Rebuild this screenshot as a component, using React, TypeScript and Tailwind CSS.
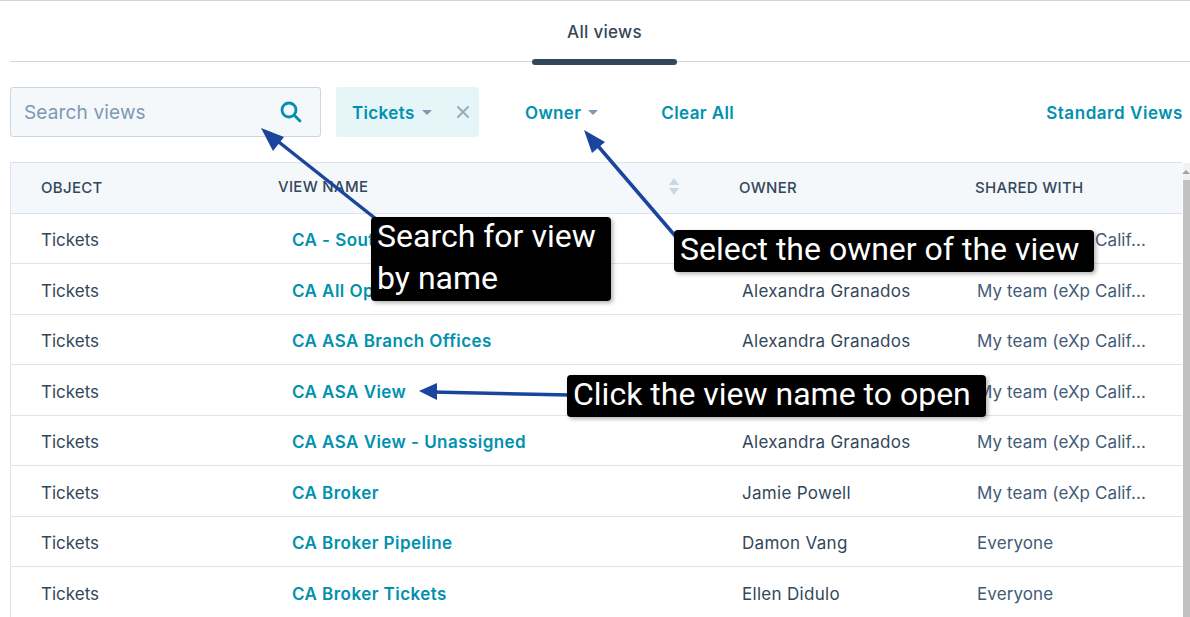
import { X } from 'lucide-react';

const rows = [
  { name: 'CA - South', owner: 'Alexandra Granados', shared: 'My team (eXp Calif...' },
  { name: 'CA All Open', owner: 'Alexandra Granados', shared: 'My team (eXp Calif...' },
  { name: 'CA ASA Branch Offices', owner: 'Alexandra Granados', shared: 'My team (eXp Calif...' },
  { name: 'CA ASA View', owner: 'Alexandra Granados', shared: 'My team (eXp Calif...' },
  { name: 'CA ASA View - Unassigned', owner: 'Alexandra Granados', shared: 'My team (eXp Calif...' },
  { name: 'CA Broker', owner: 'Jamie Powell', shared: 'My team (eXp Calif...' },
  { name: 'CA Broker Pipeline', owner: 'Damon Vang', shared: 'Everyone' },
  { name: 'CA Broker Tickets', owner: 'Ellen Didulo', shared: 'Everyone' },
];

function Caret() {
  return <span className="ml-[7px] mt-[-3px] h-0 w-0 border-x-[5px] border-t-[5px] border-x-transparent border-t-[#7c98b6]" />;
}

function Callout({ className, children }: { className: string; children: React.ReactNode }) {
  return (
    <div className={`absolute rounded-[4px] bg-black px-[6px] font-['Roboto',sans-serif] text-[32px] leading-[42px] text-white shadow-[2px_2px_4px_rgba(0,0,0,0.3)] ${className}`}>
      <div className="mt-[-2px]">{children}</div>
    </div>
  );
}

export default function App() {
  return (
    <div className="relative h-[617px] w-[1190px] overflow-hidden border-t border-[#cbd6e2] bg-white font-['Inter',sans-serif] text-[#33475b]">
      {/* Tabs */}
      <div className="ml-[10px] flex h-[61px] border-b border-[#cbd6e2] pl-[522px]">
        <div className="relative flex h-[61px] w-[145px] items-start justify-center pt-[20px] text-[17px] leading-[22px] font-medium tracking-[0.3px]">
          All views
          <div className="absolute bottom-[-3px] left-0 right-0 h-[6px] rounded-full bg-[#33475b]" />
        </div>
      </div>

      {/* Filters */}
      <div className="mt-[25px] flex h-[50px] items-center pl-[10px] pr-[7px]">
        <div className="flex h-[50px] w-[311px] items-center justify-between rounded-[3px] border border-[#cbd6e2] bg-[#f5f8fa] pl-[13px] pr-[18px] text-[19px] tracking-[0.15px] text-[#7c98b6]">
          <span className="pt-[2px]">Search views</span>
          <svg width="22" height="22" viewBox="0 0 22 22" fill="none" stroke="#0091ae" strokeWidth="2.8" strokeLinecap="round">
            <circle cx="9" cy="9" r="7" />
            <line x1="14.5" y1="14.5" x2="20" y2="20" />
          </svg>
        </div>
        <div className="ml-[15px] flex h-[50px] w-[143px] items-center rounded-[3px] bg-[#e5f5f8] pl-[16px] pt-[4px] text-[17px] font-semibold tracking-[0.35px] text-[#0091ae]">
          Tickets
          <Caret />
          <X size={20} strokeWidth={2.4} className="ml-[21px] mt-[-4px] text-[#99acc2]" />
        </div>
        <div className="ml-[46px] flex items-center pt-[4px] text-[17px] font-semibold tracking-[0.35px] text-[#0091ae]">
          Owner
          <Caret />
        </div>
        <div className="ml-[63px] pt-[4px] text-[17px] font-semibold tracking-[0.4px] text-[#0091ae]">Clear All</div>
        <div className="ml-auto pt-[4px] text-[17px] font-semibold tracking-[0.55px] text-[#0091ae]">Standard Views</div>
      </div>

      {/* Table */}
      <div className="mt-[25px] flex">
        <div className="ml-[10px] w-[1172px] border-l border-[#dfe3eb]">
          <div className="grid h-[51.5px] grid-cols-[256px_461px_236px_1fr] items-center border-y border-[#dfe3eb] bg-[#f5f8fa] text-[15px] leading-[20px] font-medium tracking-[0.3px]">
            <div className="mt-[1px] pl-[30px]">OBJECT</div>
            <div className="relative mt-[-1px] pl-[11px]">
              VIEW NAME
              <div className="absolute right-[49px] top-[1px] flex flex-col gap-[3px]">
                <span className="h-0 w-0 border-x-[5px] border-b-[7px] border-x-transparent border-b-[#cbd6e2]" />
                <span className="h-0 w-0 border-x-[5px] border-t-[7px] border-x-transparent border-t-[#cbd6e2]" />
              </div>
            </div>
            <div className="mt-[1px] pl-[11px]">OWNER</div>
            <div className="mt-[1px] pl-[11px]">SHARED WITH</div>
          </div>
          {rows.map((row) => (
            <div key={row.name} className="grid h-[50.5px] grid-cols-[256px_461px_236px_1fr] items-center border-b border-[#dfe3eb] pt-[5px] text-[17px]">
              <div className="pl-[30px]">Tickets</div>
              <div className="pl-[25px] font-semibold tracking-[0.45px] text-[#0091ae]">{row.name}</div>
              <div className="pl-[14px] tracking-[0.3px]">{row.owner}</div>
              <div className="pl-[13px] tracking-[0.1px] text-[#425b76]">{row.shared}</div>
            </div>
          ))}
        </div>
        {/* Scrollbar */}
        <div className="ml-[1px] mt-[1px] flex h-[454px] w-[7px] flex-col bg-[#f1f1f1]">
          <div className="flex h-[17px] items-center justify-end">
            <span className="h-0 w-0 border-x-[4px] border-b-[4px] border-x-transparent border-b-[#a3a3a3]" />
          </div>
          <div className="flex-1 bg-[#c1c1c1]" />
        </div>
      </div>

      {/* Annotation arrows */}
      <svg className="absolute left-0 top-[-1px]" width="1190" height="617" fill="none">
        <g stroke="#1a459c" strokeWidth="3.5">
          <line x1="376" y1="219" x2="270" y2="135" />
          <line x1="677" y1="238" x2="592" y2="139" />
          <line x1="570" y1="395" x2="432" y2="392" />
        </g>
        <g fill="#1a459c">
          <polygon points="261,128 284,137 273,151" />
          <polygon points="584,130 605,142 592,153" />
          <polygon points="419,391 437,383 437,400" />
        </g>
      </svg>

      <Callout className="left-[371px] top-[216px] h-[84px] w-[240px]">
        Search for view
        <br />
        by name
      </Callout>
      <Callout className="left-[674px] top-[229px] h-[42px] w-[420px] whitespace-nowrap">Select the owner of the view</Callout>
      <Callout className="left-[567px] top-[374px] h-[42px] w-[419px] whitespace-nowrap">Click the view name to open</Callout>
    </div>
  );
}
